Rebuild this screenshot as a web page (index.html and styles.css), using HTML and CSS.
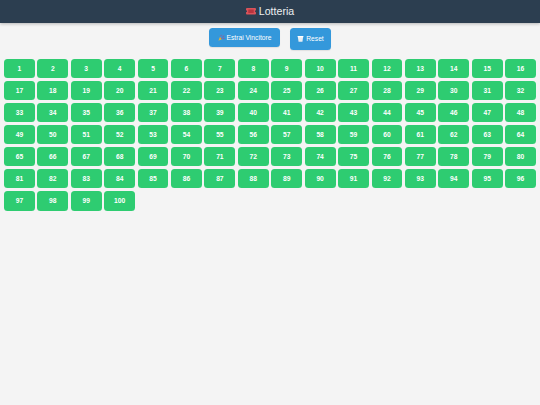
FILE: index.html
```html
<!DOCTYPE html>
<html lang="it">
<head>
<meta charset="utf-8">
<title>Lotteria</title>
<link rel="stylesheet" href="styles.css">
</head>
<body>
<header class="topbar">
  <svg class="ticket" viewBox="0 0 11 7" aria-hidden="true"><path d="M1 0h9a1 1 0 0 1 1 1v1.4a1.1 1.1 0 0 0 0 2.2V6a1 1 0 0 1-1 1H1a1 1 0 0 1-1-1V4.600a1.100 1.100 0 0 0 0-2.200V1a1 1 0 0 1 1-1z" fill="#d9535a"/><rect x="2.500" y="1.600" width="6" height="3.800" fill="#b8343e"/></svg>
  <h1 class="title">Lotteria</h1>
</header>
<div class="actions">
  <button class="btn btn-draw"><svg class="ico" viewBox="0 0 8 8" aria-hidden="true"><path d="M0.500 7.800 2.300 3 5 5.700z" fill="#e3b23c"/><path d="M3 2.500 4 1M5 3.500l2-1.500M5.500 5 7.500 5" stroke="#b04a8c" stroke-width="1"/><path d="M2.800 3.500 4.600 5.400 3.500 6z" fill="#7a5aa6"/></svg>Estrai Vincitore</button>
  <button class="btn btn-reset"><svg class="ico" viewBox="0 0 8 8" aria-hidden="true"><path d="M0.800 1.200h6.400L6.200 7.600H1.800z" fill="#e8eef3"/><path d="M0.800 1.200h6.400L7 2.600H1z" fill="#fff"/></svg>Reset</button>
</div>
<main class="grid" id="grid"></main>
<script src="app.js"></script>
</body>
</html>
```
FILE: styles.css
```css
* { box-sizing: border-box; }
html, body { margin: 0; padding: 0; }
body {
  background: #f4f4f4;
  font-family: "Liberation Sans", Arial, sans-serif;
  height: 405px;
  overflow: hidden;
}
.topbar {
  height: 23px;
  background: #2c3e50;
  box-shadow: 0 1px 3px rgba(0,0,0,.25);
  display: flex;
  align-items: center;
  justify-content: center;
  gap: 3px;
  color: #ecf0f1;
}
.ticket { width: 10px; height: 6.500px; }
.title { margin: 0; font-size: 10.600px; font-weight: 400; line-height: 1; }
.actions {
  display: flex;
  justify-content: center;
  align-items: flex-start;
  gap: 10px;
  margin-top: 5px;
  padding-left: 0;
}
.btn {
  border: 0;
  background: #3498db;
  color: #fff;
  font-family: inherit;
  font-size: 6.700px;
  font-weight: 400;
  border-radius: 3.500px;
  display: flex;
  align-items: center;
  justify-content: center;
  gap: 2px;
  padding: 0;
  box-shadow: 0 1px 1px rgba(0,0,0,.08);
}
.btn-draw { width: 71px; height: 18.500px; }
.btn-reset { width: 41px; height: 21.500px; }
.ico { width: 7px; height: 7px; }
.grid {
  display: grid;
  grid-template-columns: repeat(16, 1fr);
  grid-auto-rows: 19.500px;
  column-gap: 2.600px;
  row-gap: 2.600px;
  padding: 0 4px;
  margin-top: 9px;
}
.cell {
  background: #2ecc71;
  color: #fff;
  font-size: 6.700px;
  font-weight: 700;
  border-radius: 3.500px;
  display: flex;
  align-items: center;
  justify-content: center;
}
```
FILE: app.js
```js
const grid = document.getElementById('grid');
for (let i = 1; i <= 100; i++) {
  const cell = document.createElement('div');
  cell.className = 'cell';
  cell.textContent = i;
  grid.appendChild(cell);
}
```
